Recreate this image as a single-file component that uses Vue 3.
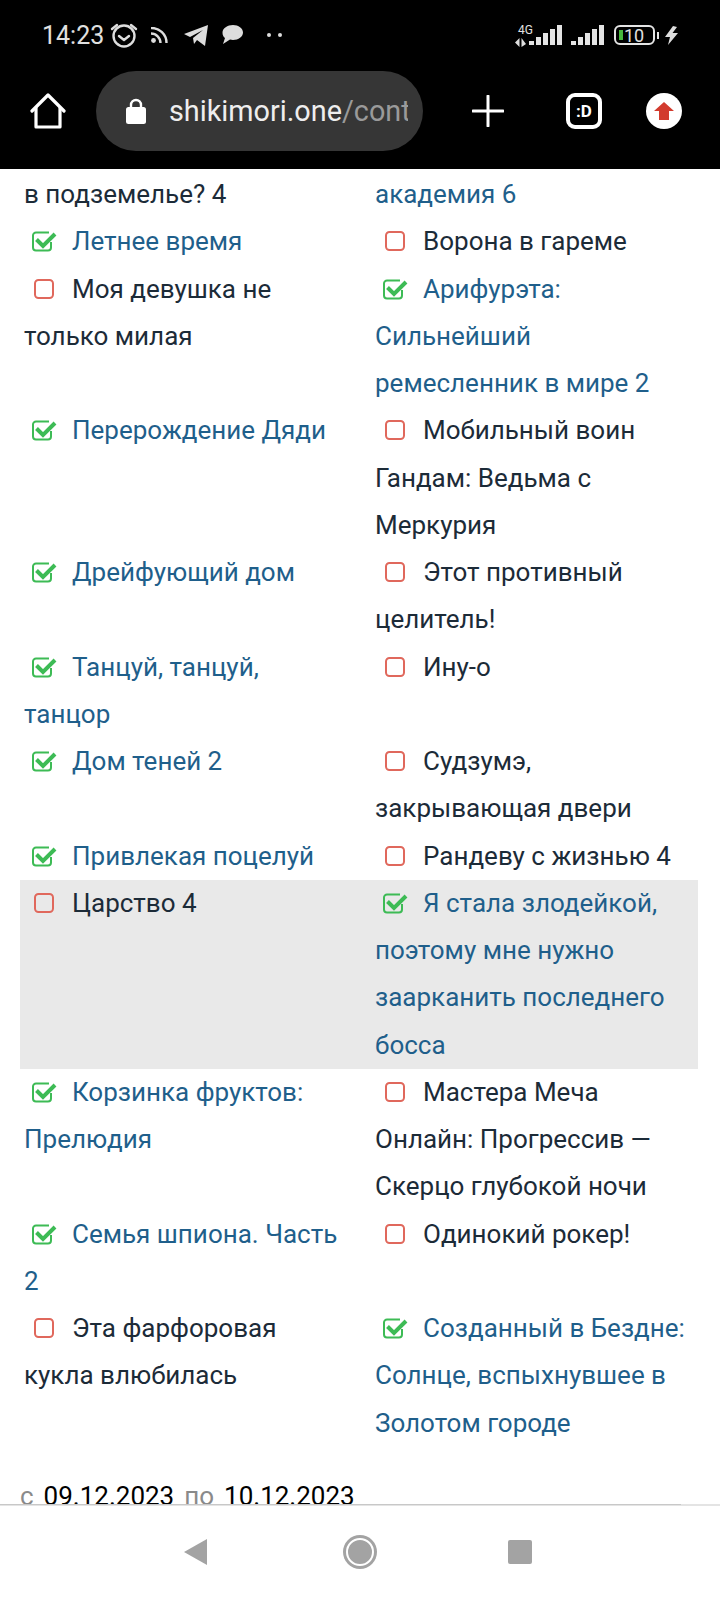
<script setup>
const rows = [
  { plain: true, left: { text: 'в подземелье? 4' }, right: { text: 'академия 6', done: true } },
  { left: { text: 'Летнее время', done: true }, right: { text: 'Ворона в гареме' } },
  { left: { text: 'Моя девушка не только милая' }, right: { text: 'Арифурэта: Сильнейший ремесленник в мире 2', done: true } },
  { left: { text: 'Перерождение Дяди', done: true }, right: { text: 'Мобильный воин Гандам: Ведьма с Меркурия' } },
  { left: { text: 'Дрейфующий дом', done: true }, right: { text: 'Этот противный целитель!' } },
  { left: { text: 'Танцуй, танцуй, танцор', done: true }, right: { text: 'Ину-о' } },
  { left: { text: 'Дом теней 2', done: true }, right: { text: 'Судзумэ, закрывающая двери' } },
  { left: { text: 'Привлекая поцелуй', done: true }, right: { text: 'Рандеву с жизнью 4' } },
  { active: true, left: { text: 'Царство 4' }, right: { text: 'Я стала злодейкой, поэтому мне нужно заарканить последнего босса', done: true } },
  { left: { text: 'Корзинка фруктов: Прелюдия', done: true }, right: { text: 'Мастера Меча Онлайн: Прогрессив — Скерцо глубокой ночи' } },
  { left: { text: 'Семья шпиона. Часть 2', done: true }, right: { text: 'Одинокий рокер!' } },
  { left: { text: 'Эта фарфоровая кукла влюбилась' }, right: { text: 'Созданный в Бездне: Солнце, вспыхнувшее в Золотом городе', done: true } },
]
const bars = [4, 8, 12, 16, 20]
</script>

<template>
  <div class="screen">
    <header class="top">
      <div class="status">
        <span class="time">14:23</span>
        <svg class="alarm" width="28" height="26" viewBox="0 0 28 26" fill="none" stroke="#ddd" stroke-width="2.4">
          <circle cx="14" cy="14" r="10.5" />
          <path d="M9 14l5 4 5-4" stroke-linecap="round" stroke-linejoin="round" />
          <path d="M2 7l5-4M26 7l-5-4" stroke-linecap="round" />
        </svg>
        <svg class="rss" width="17" height="16" viewBox="0 0 17 16" fill="none" stroke="#ddd" stroke-width="2.4">
          <circle cx="2.5" cy="13.5" r="2.4" fill="#ddd" stroke="none" />
          <path d="M0 6.5a9.5 9.5 0 0 1 9.5 9.5M0 1a15 15 0 0 1 15.500 15" />
        </svg>
        <svg class="plane" width="24" height="21" viewBox="0 0 24 21" fill="#ddd">
          <path d="M0 9L24 0 21 21 13 15 10 19 9 13 19 5 6 12Z" />
        </svg>
        <svg class="chat" width="21" height="20" viewBox="0 0 21 20" fill="#ddd">
          <path d="M11 0c5.500 0 10 3.200 10 7.500S16.500 15 11 15c-1 0-2-.1-3-.4L1 19l2-6C1.200 11.700.5 9.800.5 7.500.5 3.200 5.500 0 11 0Z" />
        </svg>
        <span class="dots"><i></i><i></i></span>
        <span class="grow"></span>
        <div class="net">
          <span class="lte">4G</span>
          <svg class="arrows" width="11" height="9" viewBox="0 0 11 9" fill="#ddd">
            <path d="M4.500 0v9L0 4.500ZM6.500 0v9L11 6Z" />
          </svg>
        </div>
        <span v-for="(h, i) in bars" :key="'a' + i" class="bar" :style="{ height: h + 'px' }"></span>
        <span class="sim-gap"></span>
        <span v-for="(h, i) in bars" :key="'b' + i" class="bar" :style="{ height: h + 'px' }"></span>
        <div class="battery"><i></i><span>10</span></div>
        <span class="nub"></span>
        <svg class="bolt" width="13" height="19" viewBox="0 0 13 19" fill="#ddd">
          <path d="M8 0L0 11h5L3 19l10-12H7.500L12 1Z" />
        </svg>
      </div>
      <div class="toolbar">
        <svg class="home" width="36" height="36" viewBox="0 0 36 36" fill="none" stroke="#fff" stroke-width="3.200" stroke-linejoin="round" stroke-linecap="round">
          <path d="M2 18L18 2l16 16" />
          <path d="M6 15v19h24V15" />
        </svg>
        <div class="pill">
          <svg width="20" height="26" viewBox="0 0 20 26">
            <path d="M5 11V7a5 5 0 0 1 10 0v4" fill="none" stroke="#fff" stroke-width="2.400" />
            <rect x="0" y="9" width="20" height="17" rx="2.500" fill="#fff" />
          </svg>
          <span class="url"><b>shikimori.one</b>/cont</span>
        </div>
        <svg class="plus" width="32" height="32" viewBox="0 0 32 32" stroke="#fff" stroke-width="3" stroke-linecap="round">
          <path d="M16 1v30M1 16h30" />
        </svg>
        <div class="ext">:D</div>
        <div class="up">
          <svg width="20" height="18" viewBox="0 0 20 18" fill="#d23b2e">
            <path d="M10 0l10 9h-5v9H5V9H0Z" />
          </svg>
        </div>
      </div>
    </header>

    <main class="page">
      <div v-for="(row, i) in rows" :key="i" class="row" :class="{ active: row.active }">
        <div v-for="side in ['left', 'right']" :key="side" class="cell" :class="{ done: row[side].done }">
          <span v-if="!row.plain" class="mark">
            <svg v-if="row[side].done" width="25" height="21" viewBox="0 0 25 21" fill="none">
              <path d="M19 11v5.500a3 3 0 0 1-3 3H4a3 3 0 0 1-3-3V4.500a3 3 0 0 1 3-3h13" stroke="#3dbb55" stroke-width="2" />
              <path d="M4.500 8.500L11 15 23 3" stroke="#3dbb55" stroke-width="4" />
            </svg>
            <svg v-else width="25" height="21" viewBox="0 0 25 21" fill="none">
              <rect x="3" y="1" width="18" height="18" rx="3.500" stroke="#e0685c" stroke-width="2" />
            </svg>
          </span>{{ row[side].text }}
        </div>
      </div>
      <p class="dates"><span>с</span>09.12.2023<span class="to">по</span>10.12.2023</p>
    </main>

    <nav class="nav">
      <span class="rule"></span>
      <span class="back"></span>
      <span class="circle"></span>
      <span class="square"></span>
    </nav>
  </div>
</template>

<style>
body {
  margin: 0;
}
</style>

<style scoped>
.screen {
  display: flex;
  flex-direction: column;
  width: 720px;
  height: 1600px;
  overflow: hidden;
  background: #fff;
  font-family: Roboto, "Noto Sans", sans-serif;
}

.top {
  flex: none;
  height: 169px;
  background: #000;
}

.status {
  display: flex;
  align-items: center;
  height: 70px;
  padding: 0 42px;
  box-sizing: border-box;
  color: #e0e0e0;
}
.time {
  font-size: 25px;
  width: 68px;
}
.alarm { margin-right: 13px; }
.rss { margin-right: 16px; }
.plane { margin-right: 14px; }
.chat { margin-right: 24px; }
.dots { display: flex; gap: 7px; }
.dots i {
  width: 4px;
  height: 4px;
  border-radius: 50%;
  background: #ddd;
}
.grow { flex: 1; }
.net {
  display: flex;
  flex-direction: column;
  width: 11px;
  margin-right: 1px;
}
.lte {
  margin-left: 3px;
  font-size: 12px;
  line-height: 12px;
  white-space: nowrap;
}
.arrows { margin-top: 2px; }
.bar {
  width: 5px;
  margin-left: 2px;
  background: #e4e4e4;
  align-self: flex-end;
  margin-bottom: 25px;
}
.sim-gap { width: 7px; }
.battery {
  display: flex;
  align-items: center;
  width: 41px;
  height: 20px;
  margin-left: 10px;
  box-sizing: border-box;
  border: 2px solid #e4e4e4;
  border-radius: 6px;
  font-size: 18px;
}
.battery i {
  width: 4px;
  height: 10px;
  margin: 0 1px 0 3px;
  background: #46b83c;
}
.nub {
  width: 2px;
  height: 7px;
  margin: 0 6px 0 2px;
  background: #e4e4e4;
}

.toolbar {
  display: flex;
  align-items: center;
  height: 82px;
  padding: 0 0 0 30px;
}
.pill {
  display: flex;
  align-items: center;
  gap: 23px;
  width: 282px;
  height: 80px;
  margin-left: 30px;
  padding: 0 15px 0 30px;
  border-radius: 40px;
  background: #363636;
  overflow: hidden;
}
.pill svg { flex: none; }
.url {
  overflow: hidden;
  white-space: nowrap;
  font-size: 28.8px;
  color: #9a9a9a;
}
.url b {
  font-weight: 400;
  color: #eee;
}
.plus { margin-left: 49px; }
.ext {
  display: flex;
  align-items: center;
  justify-content: center;
  width: 36px;
  height: 36px;
  margin-left: 62px;
  box-sizing: border-box;
  border: 4px solid #fff;
  border-radius: 9px;
  color: #fff;
  font-size: 17px;
  font-weight: 700;
}
.up {
  display: flex;
  align-items: center;
  justify-content: center;
  width: 36px;
  height: 36px;
  margin-left: 44px;
  border-radius: 50%;
  background: #fff;
}

.page {
  flex: 1;
  min-height: 0;
  overflow: hidden;
  padding: 2px 22px 0 20px;
  font-size: 26px;
  line-height: 47.25px;
  color: #1c2b38;
}
.row {
  display: grid;
  grid-template-columns: 351px 327px;
}
.row.active { background: #e9e9e9; }
.cell { padding: 0 4px; }
.cell:first-child { padding-right: 26px; }
.cell.done { color: #1f5f8b; }
.mark {
  display: inline-block;
  width: 48px;
  height: 21px;
  padding-left: 8px;
  box-sizing: border-box;
  vertical-align: -2px;
}
.mark svg { display: block; }
.dates {
  margin: 26px 0 0;
  color: #000;
}
.dates span {
  margin-right: 10px;
  color: #8a8a8a;
}
.dates .to { margin-left: 10px; }

.nav {
  position: relative;
  flex: none;
  display: flex;
  justify-content: center;
  align-items: center;
  height: 96px;
  padding-bottom: 2px;
  box-sizing: border-box;
  border-top: 2px solid #e4e4e4;
  background: #fff;
}
.rule {
  position: absolute;
  top: -2px;
  left: 0;
  width: 681px;
  height: 1px;
  background: #c8c8c8;
}
.back {
  width: 0;
  height: 0;
  margin-right: 139px;
  border-top: 13px solid transparent;
  border-bottom: 13px solid transparent;
  border-right: 23px solid #a3a3a3;
}
.circle {
  width: 24px;
  height: 24px;
  margin-right: 134px;
  border: 2px solid #fff;
  border-radius: 50%;
  background: #a3a3a3;
  box-shadow: 0 0 0 3px #a3a3a3;
}
.square {
  width: 24px;
  height: 24px;
  margin-right: 4px;
  border-radius: 2px;
  background: #a3a3a3;
}
</style>
